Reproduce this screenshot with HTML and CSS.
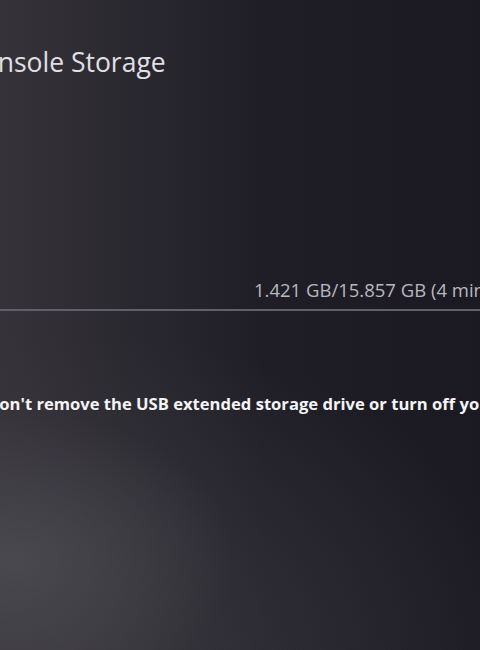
FILE: index.html
```html
<!DOCTYPE html>
<html lang="en">
<head>
    <meta charset="UTF-8">
    <meta name="viewport" content="width=device-width, initial-scale=1.0">
    <title>Console Storage</title>
    <link rel="stylesheet" href="styles.css">
</head>
<body>
    <div class="screen">
        <h1 class="title">Console Storage</h1>

        <div class="progress">
            <p class="amount">1.421 GB/15.857 GB (4 minutes remaining)</p>
            <div class="bar"></div>
        </div>

        <p class="warning">Don't remove the USB extended storage drive or turn off your PS5.</p>
    </div>
</body>
</html>
```

FILE: styles.css
```css
html, body {
    height: 100%;
}
body {
    margin: 0;
    overflow: hidden;
    font-family: 'Open Sans', 'Noto Sans', sans-serif;
    color: #e6e6ea;
    background:
        radial-gradient(ellipse 220px 150px at 15px 560px, rgba(78, 78, 84, 0.75), rgba(78, 78, 84, 0) 100%),
        radial-gradient(ellipse 480px 330px at 60px 660px, rgba(62, 60, 66, 0.8), rgba(62, 60, 66, 0) 100%),
        linear-gradient(to right, #36323a 0%, #2b2930 25%, #1f1e27 55%, #1b1a23 100%);
}
.screen {
    width: 1000px;
    white-space: nowrap;
}
.title {
    margin: 0 0 0 -35px;
    padding-top: 47px;
    font-size: 26.5px;
    font-weight: 400;
    line-height: 31px;
    color: #e0e0e4;
}
.progress {
    margin-top: 200px;
}
.amount {
    margin: 0 0 0 254px;
    font-size: 18.5px;
    line-height: 24px;
    color: #b8b8bf;
}
.bar {
    margin-top: 7px;
    height: 2px;
    width: 480px;
    background: #606068;
}
.warning {
    margin: 82px 0 0 -13px;
    font-size: 16.6px;
    font-weight: 700;
    line-height: 22px;
    color: #f4f4f6;
}
```
